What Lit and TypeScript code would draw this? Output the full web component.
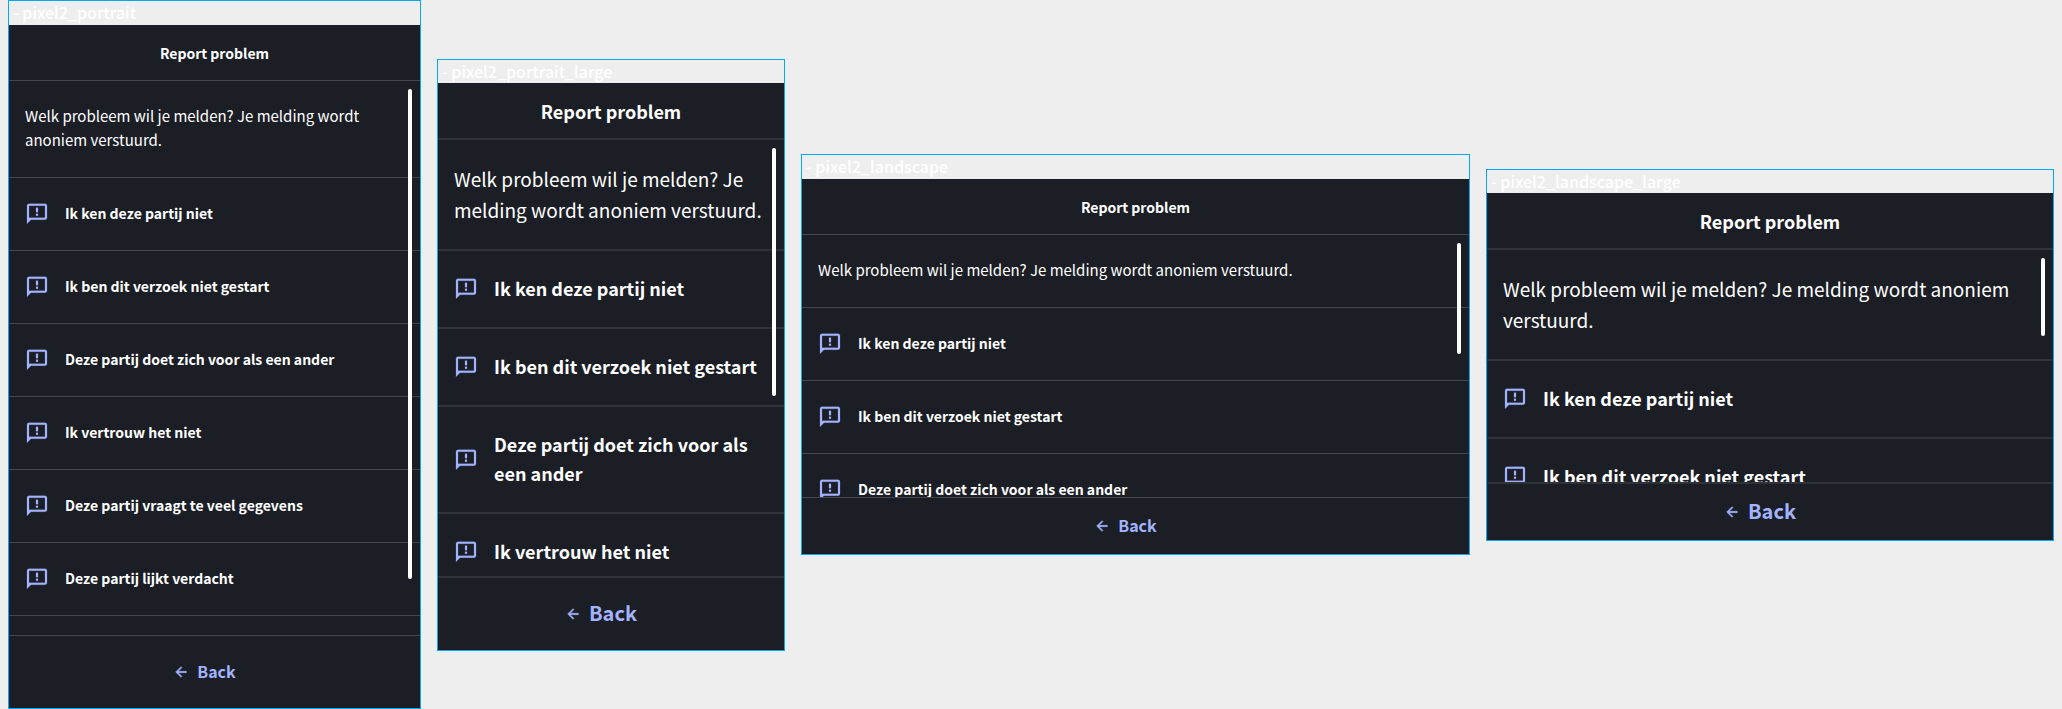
import { LitElement, html, css } from "lit";
import { customElement, property } from "lit/decorators.js";
import { classMap } from "lit/directives/class-map.js";

interface Preview {
  name: string;
  variant: string;
  large: boolean;
  share: number;
  reasons: number;
}

const INTRO = "Welk probleem wil je melden? Je melding wordt anoniem verstuurd.";

const REASONS = [
  "Ik ken deze partij niet",
  "Ik ben dit verzoek niet gestart",
  "Deze partij doet zich voor als een ander",
  "Ik vertrouw het niet",
  "Deze partij vraagt te veel gegevens",
  "Deze partij lijkt verdacht",
];

const PREVIEWS: Preview[] = [
  { name: "pixel2_portrait", variant: "portrait", large: false, share: 413, reasons: 6 },
  { name: "pixel2_portrait_large", variant: "portrait-large", large: true, share: 348, reasons: 4 },
  { name: "pixel2_landscape", variant: "landscape", large: false, share: 669, reasons: 3 },
  { name: "pixel2_landscape_large", variant: "landscape-large", large: true, share: 568, reasons: 2 },
];

@customElement("report-screen")
export class ReportScreen extends LitElement {
  @property() name = "";
  @property() variant = "portrait";
  @property({ type: Boolean }) large = false;
  @property({ type: Number }) reasons = REASONS.length;

  static styles = css`
    :host {
      display: block;
      min-width: 0;
    }
    .frame {
      border: 1px solid #03a9f4;
      --rule: 1px solid #43464c;
      --text: 14px;
      --text-line: 24px;
      --body: 15px;
      --body-line: 24px;
      --action: 16px;
      --row-pad: 23px 16px 25px;
    }
    .large {
      --rule: 2px solid #2f3238;
      --text: 18px;
      --text-line: 29px;
      --body: 19px;
      --body-line: 31px;
      --action: 20px;
      --row-pad: 23px 16px 24px;
    }
    .label {
      margin: 0;
      padding: 0 4px;
      height: 24px;
      line-height: 22px;
      font-size: 16px;
      font-weight: 500;
      color: #ffffff;
      overflow: hidden;
      white-space: nowrap;
    }
    .large .label {
      height: 23px;
    }
    .screen {
      background: #1c1e25;
      color: #ffffff;
    }
    .title {
      margin: 0;
      padding-top: 2px;
      line-height: 53px;
      font-size: var(--text);
      font-weight: 700;
      text-align: center;
      border-bottom: var(--rule);
    }
    .view {
      position: relative;
      overflow: hidden;
    }
    .portrait .view { height: 554px; }
    .portrait-large .view { height: 436px; }
    .landscape .view { height: 262px; }
    .landscape-large .view { height: 232px; }
    .intro {
      margin: 0;
      padding: var(--row-pad);
      font-size: var(--body);
      line-height: var(--body-line);
      border-bottom: var(--rule);
    }
    .list {
      margin: 0;
      padding: 0;
      list-style: none;
    }
    .reason {
      display: flex;
      align-items: center;
      gap: 16px;
      width: 100%;
      margin: 0;
      padding: var(--row-pad);
      border: 0;
      border-bottom: var(--rule);
      background: none;
      color: inherit;
      font: inherit;
      font-size: var(--text);
      font-weight: 700;
      line-height: var(--text-line);
      text-align: left;
      cursor: pointer;
    }
    .icon {
      flex: none;
      width: 24px;
      height: 24px;
      fill: #a2b3ff;
      stroke: #a2b3ff;
      stroke-width: 0.2;
    }
    .thumb {
      position: absolute;
      top: 8px;
      right: 8px;
      width: 4px;
      border-radius: 2px;
      background: #ffffff;
    }
    .portrait .thumb { height: 490px; }
    .portrait-large .thumb { height: 248px; }
    .landscape .thumb { height: 111px; }
    .landscape-large .thumb { height: 78px; }
    .footer {
      display: flex;
      border-top: var(--rule);
    }
    .back {
      flex: 1;
      display: flex;
      align-items: center;
      justify-content: center;
      gap: 8px;
      height: 56px;
      margin: 0;
      padding: 0 20px 2px 0;
      border: 0;
      background: none;
      color: #a2b3ff;
      font: inherit;
      font-size: var(--action);
      font-weight: 700;
      line-height: 24px;
      cursor: pointer;
    }
    .portrait .back,
    .portrait-large .back {
      height: 72px;
    }
    .arrow {
      flex: none;
      width: 16px;
      height: 16px;
      fill: #a2b3ff;
      stroke: #a2b3ff;
      stroke-width: 0.8;
    }
  `;

  render() {
    const frame = { frame: true, large: this.large, [this.variant]: true };
    return html`
      <article class=${classMap(frame)}>
        <p class="label">- ${this.name}</p>
        <div class="screen">
          <h2 class="title">Report problem</h2>
          <div class="view">
            <p class="intro">${INTRO}</p>
            <ul class="list">
              ${REASONS.slice(0, this.reasons).map(
                (reason) => html`<li>
                  <button class="reason" type="button">
                    <svg class="icon" viewBox="0 -0.700 24 24" aria-hidden="true">
                      <path d="M20 2H4c-1.1 0-2 .9-2 2v18l4-4h14c1.1 0 2-.9 2-2V4c0-1.1-.9-2-2-2zm0 14H4V4h16v12zM11 12h2v2h-2zM11 6h2v4.500h-2z" />
                    </svg>
                    <span>${reason}</span>
                  </button>
                </li>`
              )}
            </ul>
            <div class="thumb"></div>
          </div>
          <div class="footer">
            <button class="back" type="button">
              <svg class="arrow" viewBox="0 -1.5 24 24" aria-hidden="true">
                <path d="M20 11H7.83l5.59-5.59L12 4l-8 8 8 8 1.41-1.41L7.83 13H20v-2z" />
              </svg>
              <span>Back</span>
            </button>
          </div>
        </div>
      </article>
    `;
  }
}

@customElement("app-root")
export class AppRoot extends LitElement {
  static styles = css`
    :host {
      display: block;
      min-height: 100vh;
      background: #eeeeee;
      font-family: "Noto Sans CJK JP", "Noto Sans", sans-serif;
    }
    .board {
      display: flex;
      align-items: center;
      gap: 16px;
      padding: 0 8px;
    }
  `;

  render() {
    return html`
      <main class="board">
        ${PREVIEWS.map(
          (p) => html`<report-screen
            style="flex: ${p.share} 1 0"
            .name=${p.name}
            .variant=${p.variant}
            .large=${p.large}
            .reasons=${p.reasons}
          ></report-screen>`
        )}
      </main>
    `;
  }
}
